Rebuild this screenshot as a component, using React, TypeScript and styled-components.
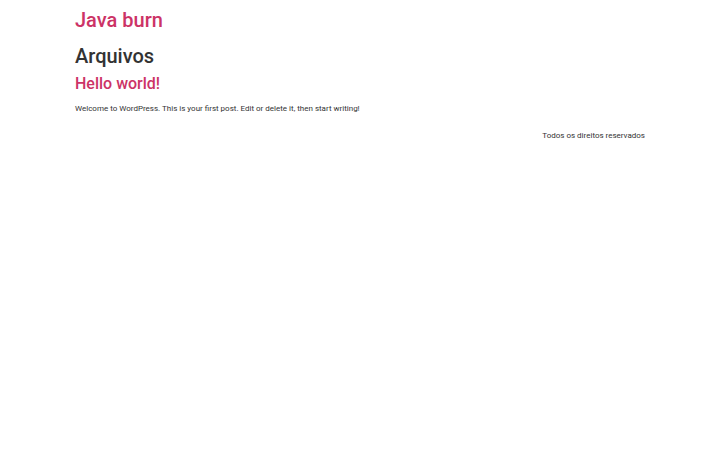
import styled, { createGlobalStyle } from 'styled-components';

const GlobalStyle = createGlobalStyle`
  body {
    margin: 0;
    background: #fff;
    color: #333;
    font-family: Roboto, 'Liberation Sans', sans-serif;
    font-size: 8px;
    line-height: 1.5;
  }
`;

const Container = styled.div`
  max-width: 570px;
  margin: 0 auto;
`;

const Header = styled.header`
  padding: 8px 0 12px;
`;

const SiteTitle = styled.a`
  display: block;
  margin: 0;
  font-size: 20px;
  line-height: 1.2;
  font-weight: 500;
  color: #cc3366;
  text-decoration: none;
`;

const PageTitle = styled.h1`
  margin: 0 0 6px;
  font-size: 20px;
  line-height: 1.2;
  font-weight: 500;
  color: #333;
`;

const PostTitle = styled.h2`
  margin: 0 0 10px;
  font-size: 16px;
  line-height: 1.2;
  font-weight: 500;

  a {
    color: #cc3366;
    text-decoration: none;
  }
`;

const Excerpt = styled.p`
  margin: 0 0 8px;
`;

const Footer = styled.footer`
  display: flex;
  justify-content: flex-end;
  padding: 7px 0;
`;

export default function App() {
  return (
    <>
      <GlobalStyle />
      <Container>
        <Header>
          <SiteTitle href='#'>Java burn</SiteTitle>
        </Header>
        <main>
          <PageTitle>Arquivos</PageTitle>
          <article>
            <PostTitle>
              <a href='#'>Hello world!</a>
            </PostTitle>
            <Excerpt>
              Welcome to WordPress. This is your first post. Edit or delete it,
              then start writing!
            </Excerpt>
          </article>
        </main>
        <Footer>Todos os direitos reservados</Footer>
      </Container>
    </>
  );
}
